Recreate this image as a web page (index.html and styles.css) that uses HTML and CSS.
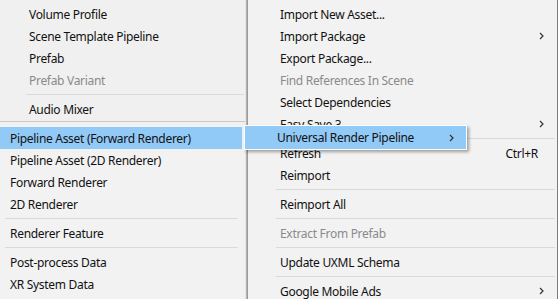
FILE: index.html
```html
<!DOCTYPE html>
<html lang="en">
<head>
	<meta charset="UTF-8">
	<title>Assets menu</title>
	<link rel="stylesheet" href="styles.css">
</head>
<body>
	<div class="desk">
		<!-- main Assets menu -->
		<ul class="menu main">
			<li class="item">Import New Asset...</li>
			<li class="item sub">Import Package<svg class="arrow" viewBox="0 0 5 8"><polyline points="1,1 4,4 1,7"/></svg></li>
			<li class="item">Export Package...</li>
			<li class="item off">Find References In Scene</li>
			<li class="item">Select Dependencies</li>
			<li class="item sub">Easy Save 3<svg class="arrow" viewBox="0 0 5 8"><polyline points="1,1 4,4 1,7"/></svg></li>
			<li class="sep"></li>
			<li class="item">Refresh<span class="key">Ctrl+R</span></li>
			<li class="item">Reimport</li>
			<li class="sep"></li>
			<li class="item">Reimport All</li>
			<li class="sep"></li>
			<li class="item off">Extract From Prefab</li>
			<li class="sep"></li>
			<li class="item">Update UXML Schema</li>
			<li class="sep"></li>
			<li class="item sub">Google Mobile Ads<svg class="arrow" viewBox="0 0 5 8"><polyline points="1,1 4,4 1,7"/></svg></li>
		</ul>

		<!-- Create submenu -->
		<ul class="menu create">
			<li class="item">Volume Profile</li>
			<li class="item">Scene Template Pipeline</li>
			<li class="item">Prefab</li>
			<li class="item off">Prefab Variant</li>
			<li class="sep"></li>
			<li class="item">Audio Mixer</li>
		</ul>

		<!-- hovered item -->
		<div class="hover">
			<span>Universal Render Pipeline</span>
			<svg class="arrow" viewBox="0 0 5 8"><polyline points="1,1 4,4 1,7"/></svg>
		</div>

		<!-- URP submenu -->
		<ul class="menu urp">
			<li class="item current">Pipeline Asset (Forward Renderer)</li>
			<li class="item">Pipeline Asset (2D Renderer)</li>
			<li class="item">Forward Renderer</li>
			<li class="item">2D Renderer</li>
			<li class="sep"></li>
			<li class="item">Renderer Feature</li>
			<li class="sep"></li>
			<li class="item">Post-process Data</li>
			<li class="item">XR System Data</li>
		</ul>
	</div>
</body>
</html>
```

FILE: styles.css
```css
*{margin: 0px; padding: 0px;}
body{
	background-color: #f0f0f0;
	font-family: "Noto Sans", "Open Sans", sans-serif;
	font-size: 12px;
	letter-spacing: -0.3px;
	color: #111;
}
.desk{
	position: relative;
	width: 558px;
	height: 299px;
	overflow: hidden;
}
.menu{
	position: absolute;
	list-style-type: none;
	display: flex;
	flex-direction: column;
}
.item{
	display: flex;
	align-items: center;
	height: 22px;
	white-space: nowrap;
}
.off{
	color: #8a8a8a;
}
.sep{
	height: 7px;
	display: flex;
	align-items: center;
}
.sep::after{
	content: "";
	flex: 1;
	height: 1px;
	background-color: #d9d9d9;
}
.arrow{
	width: 5px;
	height: 8px;
	margin-left: auto;
	fill: none;
	stroke: #333;
	stroke-width: 1.2;
}
.key{
	margin-left: auto;
	margin-right: 6px;
}

/* main menu */
.main{
	left: 247px;
	top: 0px;
	width: 309px;
	height: 320px;
	padding-top: 3px;
	background-color: #f2f2f2;
	border-left: 1px solid #9a9a9a;
	border-right: 1px solid #7a7a7a;
	box-shadow: -1px 0 1px rgba(0, 0, 0, .25);
}
.main .item{
	padding: 0 13px 0 32px;
}
.main .sep{
	padding: 0 2px 0 28px;
}

/* create submenu */
.create{
	left: 0px;
	top: 0px;
	width: 245px;
	height: 122px;
	padding-top: 3px;
	background-color: #f0f0f0;
	box-sizing: border-box;
	border-bottom: 1px solid #c8c8c8;
}
.create .item{
	padding-left: 29px;
}
.create .sep{
	padding: 0 1px 0 26px;
}

/* hovered item */
.hover{
	position: absolute;
	left: 244px;
	top: 125px;
	width: 223px;
	height: 25px;
	display: flex;
	align-items: center;
	padding: 0 12px 0 32px;
	box-sizing: border-box;
	background-color: #91c9f7;
	border: 1px solid #fff;
	box-shadow: 2px 2px 3px rgba(0, 0, 0, .35);
	z-index: 3;
}

/* URP submenu */
.urp{
	left: 0px;
	top: 125px;
	width: 244px;
	height: 180px;
	padding: 2px 2px 0 0;
	box-sizing: border-box;
	background-color: #f2f2f2;
	z-index: 2;
}
.urp .item{
	padding-left: 10px;
}
.urp .sep{
	padding: 0 4px 0 5px;
}
.current{
	background-color: #91c9f7;
}
```
